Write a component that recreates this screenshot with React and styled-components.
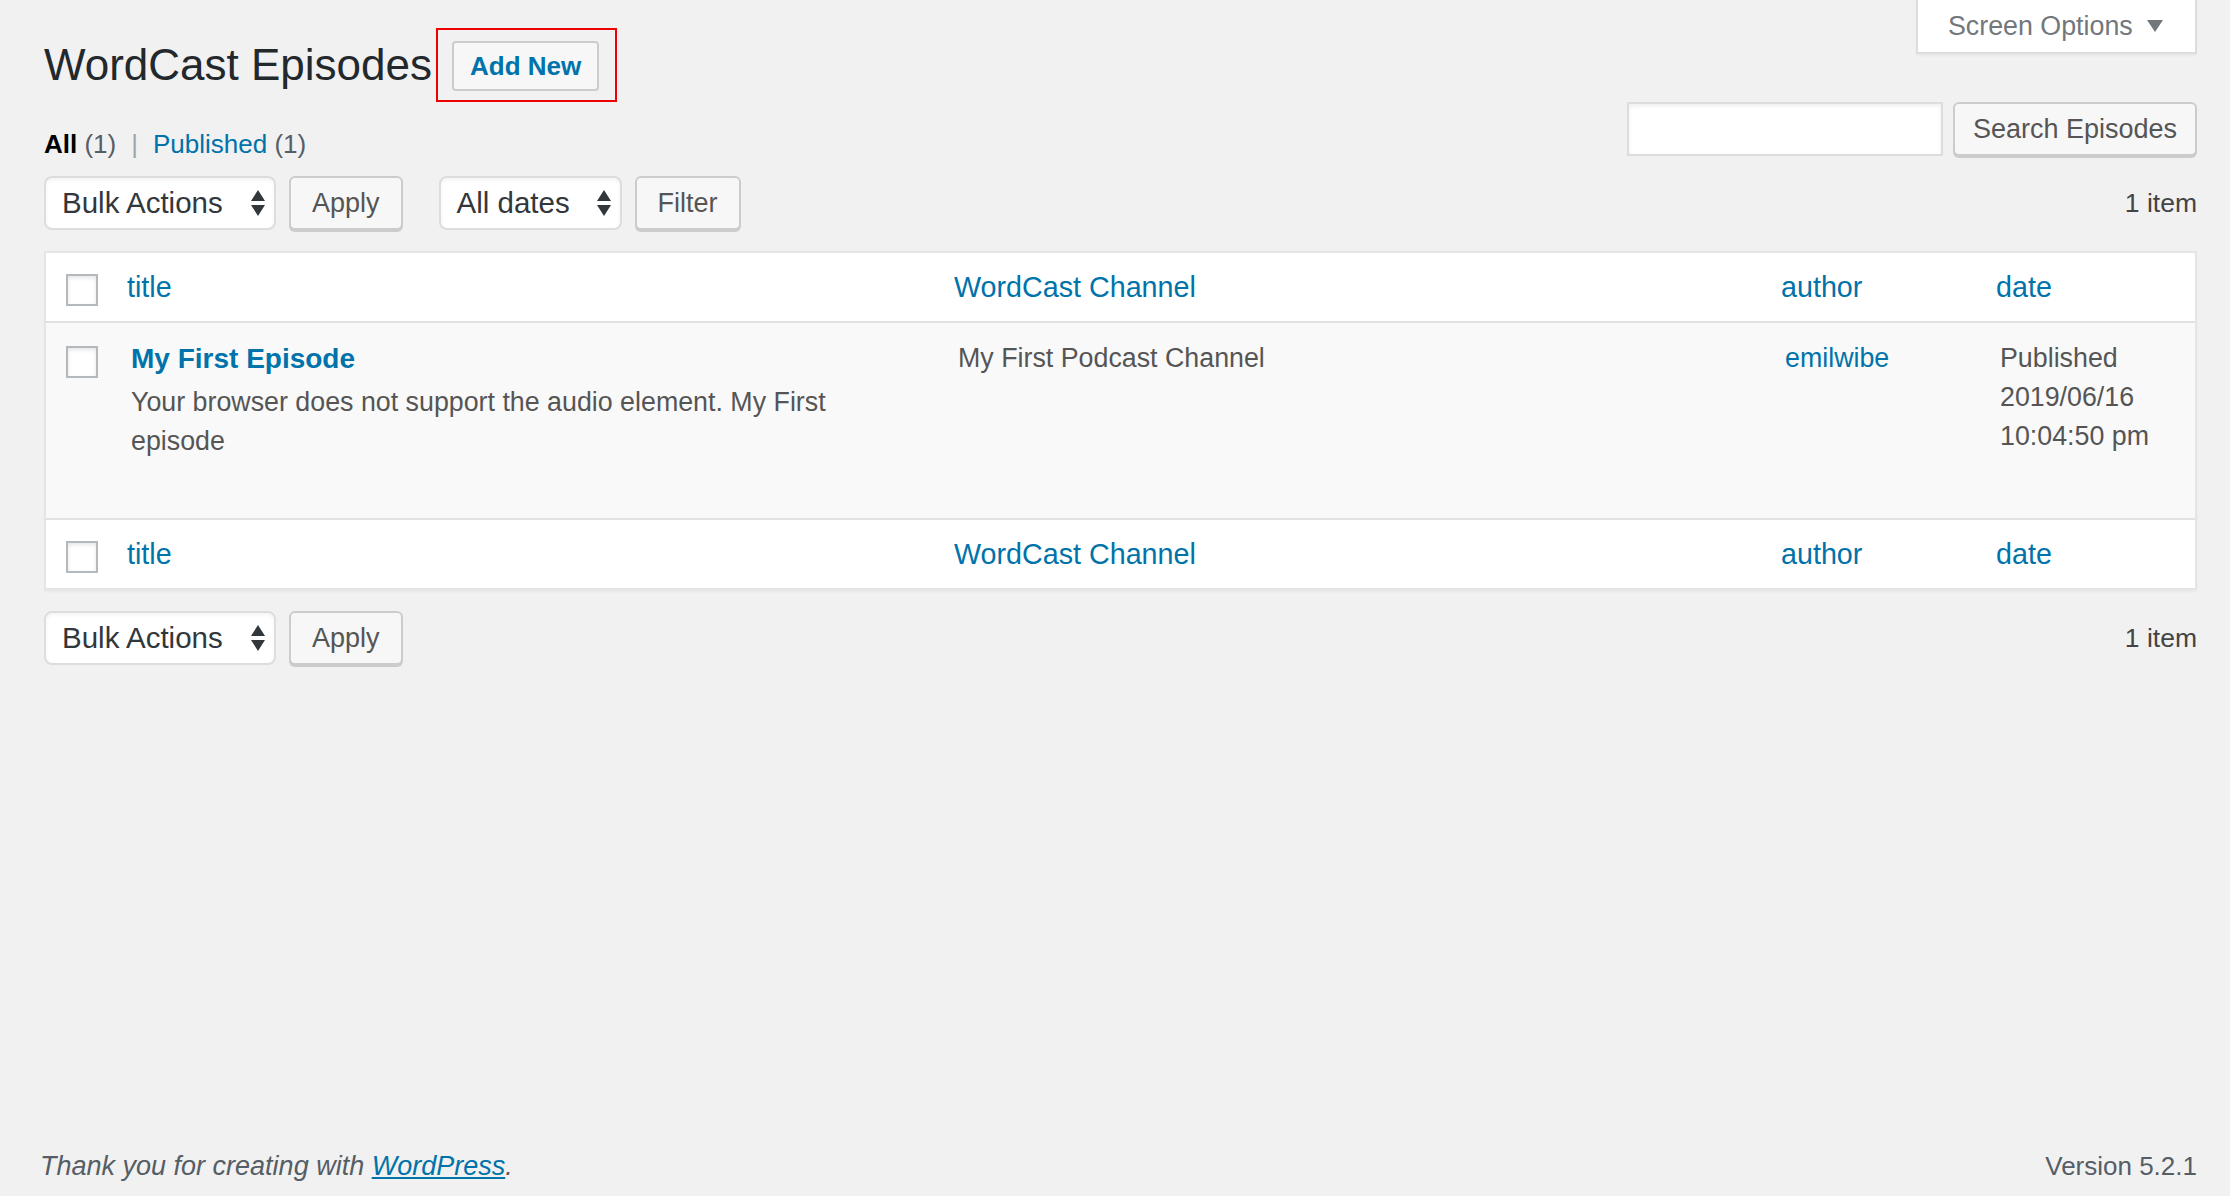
import React from 'react';
import styled, { createGlobalStyle } from 'styled-components';

const GlobalStyle = createGlobalStyle`
  html, body {
    margin: 0;
    padding: 0;
    background: #f1f1f1;
  }
  body {
    font-family: "Liberation Sans", Arial, sans-serif;
    color: #444;
  }
  a {
    color: #0073aa;
    text-decoration: none;
  }
`

const Page = styled.div`
  min-height:       100vh;
  box-sizing:       border-box;
  display:          flex;
  flex-direction:   column;
  padding:          0 33px 0 44px;
`
const Header = styled.div`
  display:          flex;
  justify-content:  space-between;
  align-items:      flex-start;
`
const HeadLeft = styled.div`
  display:          flex;
  flex-direction:   column;
  padding-top:      28px;
`
const TitleRow = styled.div`
  display:          flex;
  align-items:      center;
`
const Title = styled.h1`
  margin:           0;
  font-size:        44px;
  font-weight:      400;
  line-height:      74px;
  color:            #23282d;
`
const Highlight = styled.span`
  display:          flex;
  margin-left:      4px;
  padding:          11px 16px 9px 14px;
  border:           2px solid #ee0000;
`
const AddNew = styled.a`
  display:          flex;
  align-items:      center;
  box-sizing:       border-box;
  height:           50px;
  padding:          0 16px;
  border:           2px solid #ccc;
  border-radius:    4px;
  background:       #f7f7f7;
  color:            #0073aa;
  font-size:        26px;
  font-weight:      700;
`
const SubSub = styled.div`
  margin-top:       24px;
  display:          flex;
  align-items:      center;
  gap:              8px;
  font-size:        26px;
  line-height:      36px;
  color:            #555d66;
`
const Current = styled.span`
  color:            #000;
  font-weight:      700;
`
const Sep = styled.span`
  color:            #a0a5aa;
  margin:           0 7px;
`
const HeadRight = styled.div`
  display:          flex;
  flex-direction:   column;
  align-items:      flex-end;
`
const ScreenTab = styled.div`
  display:          flex;
  align-items:      center;
  gap:              14px;
  box-sizing:       border-box;
  width:            281px;
  height:           54px;
  padding:          0 28px 0 30px;
  background:       #fff;
  border:           2px solid #ddd;
  border-top:       none;
  box-shadow:       0 2px 2px rgba(0, 0, 0, .04);
  color:            #72777c;
  font-size:        26.8px;
`
const SearchBox = styled.div`
  margin-top:       48px;
  display:          flex;
  gap:              10px;
`
const SearchInput = styled.input`
  box-sizing:       border-box;
  width:            316px;
  height:           54px;
  border:           2px solid #ddd;
  background:       #fff;
  box-shadow:       inset 0 2px 4px rgba(0, 0, 0, .07);
  outline:          none;
`
const Button = styled.button`
  box-sizing:       border-box;
  height:           54px;
  padding:          0 ${p => p.$pad || 21}px;
  border:           2px solid #ccc;
  border-radius:    6px;
  background:       #f7f7f7;
  box-shadow:       0 2px 0 #ccc;
  color:            #555;
  font-family:      inherit;
  font-size:        27px;
`
const TableNav = styled.div`
  display:          flex;
  align-items:      center;
  margin-top:       ${p => p.$top}px;
`
const Select = styled.div`
  display:          flex;
  align-items:      center;
  justify-content:  space-between;
  box-sizing:       border-box;
  width:            ${p => p.$w}px;
  height:           54px;
  padding:          0 9px 0 16px;
  margin-right:     13px;
  border:           2px solid #ddd;
  border-radius:    8px;
  background:       #fff;
  box-shadow:       inset 0 2px 4px rgba(0, 0, 0, .05);
  color:            #32373c;
  font-size:        29.5px;
`
const Spacer = styled.div`
  width:            36px;
`
const Count = styled.span`
  margin-left:      auto;
  font-size:        26.5px;
  color:            #444;
`
const ListTable = styled.table`
  width:            100%;
  margin-top:       21px;
  border-collapse:  separate;
  border-spacing:   0;
  table-layout:     fixed;
  background:       #fff;
  border:           2px solid #e5e5e5;
  box-shadow:       0 2px 2px rgba(0, 0, 0, .04);
`
const Col = styled.col`
  width:            ${p => p.$w};
`
const HeadCell = styled.th`
  height:           70px;
  padding:          0 16px;
  box-sizing:       border-box;
  text-align:       left;
  vertical-align:   middle;
  font-weight:      400;
  font-size:        28.7px;
  ${p => p.$foot ? 'border-top: 2px solid #e1e1e1;' : 'border-bottom: 2px solid #e1e1e1;'}
`
const CheckCell = styled.td`
  padding:          ${p => p.$top}px 0 0 20px;
  vertical-align:   top;
  ${p => p.$head && (p.$foot ? 'border-top: 2px solid #e1e1e1;' : 'border-bottom: 2px solid #e1e1e1;')}
`
const Check = styled.input.attrs({ type: 'checkbox' })`
  appearance:       none;
  display:          block;
  margin:           0;
  box-sizing:       border-box;
  width:            32px;
  height:           32px;
  border:           2px solid #b4b9be;
  background:       #fff;
  box-shadow:       inset 0 2px 4px rgba(0, 0, 0, .1);
`
const BodyRow = styled.tr`
  background:       #f9f9f9;
`
const Cell = styled.td`
  padding:          16px 20px ${p => p.$bottom || 16}px;
  vertical-align:   top;
  font-size:        26.8px;
  line-height:      39px;
  color:            #555;
`
const RowTitle = styled.a`
  display:          block;
  margin-bottom:    5px;
  font-size:        28px;
  font-weight:      700;
`
const Footer = styled.div`
  margin:           auto 0 0 -4px;
  padding-bottom:   12px;
  display:          flex;
  justify-content:  space-between;
  font-size:        27px;
  line-height:      36px;
  color:            #555d66;
`
const Thanks = styled.span`
  font-style:       italic;
  a {
    text-decoration: underline;
  }
`
const Version = styled.span`
  font-size:        26px;
`

const Arrows = () => (
  <svg width="14" height="26" viewBox="0 0 14 26">
    <path d="M0 11 L7 0 L14 11 Z M0 15 L14 15 L7 26 Z" fill="#32373c" />
  </svg>
)

const Caret = () => (
  <svg width="16" height="12" viewBox="0 0 16 12">
    <path d="M0 0 H16 L8 12 Z" fill="#72777c" />
  </svg>
)

const Nav = ({ top, dates }) => (
  <TableNav $top={top}>
    <Select $w={232}>Bulk Actions<Arrows /></Select>
    <Button>Apply</Button>
    {dates && (
      <>
        <Spacer />
        <Select $w={183}>All dates<Arrows /></Select>
        <Button>Filter</Button>
      </>
    )}
    <Count>1 item</Count>
  </TableNav>
)

const Columns = ({ foot }) => (
  <tr>
    <CheckCell $top={21} $head $foot={foot}><Check /></CheckCell>
    <HeadCell $foot={foot}><a href="#">title</a></HeadCell>
    <HeadCell $foot={foot}><a href="#">WordCast Channel</a></HeadCell>
    <HeadCell $foot={foot}><a href="#">author</a></HeadCell>
    <HeadCell $foot={foot}><a href="#">date</a></HeadCell>
  </tr>
)

export default function App() {
  return (
    <Page>
      <GlobalStyle />
      <Header>
        <HeadLeft>
          <TitleRow>
            <Title>WordCast Episodes</Title>
            <Highlight><AddNew href="#">Add New</AddNew></Highlight>
          </TitleRow>
          <SubSub>
            <span><Current>All</Current> (1)</span>
            <Sep>|</Sep>
            <span><a href="#">Published</a> (1)</span>
          </SubSub>
        </HeadLeft>
        <HeadRight>
          <ScreenTab>Screen Options<Caret /></ScreenTab>
          <SearchBox>
            <SearchInput />
            <Button $pad={18}>Search Episodes</Button>
          </SearchBox>
        </HeadRight>
      </Header>

      <Nav top={14} dates />

      <ListTable>
        <colgroup>
          <Col $w="65px" />
          <Col $w="auto" />
          <Col $w="auto" />
          <Col $w="215px" />
          <Col $w="215px" />
        </colgroup>
        <thead>
          <Columns />
        </thead>
        <tbody>
          <BodyRow>
            <CheckCell $top={23}><Check /></CheckCell>
            <Cell $bottom={57}>
              <RowTitle href="#">My First Episode</RowTitle>
              Your browser does not support the audio element. My First episode
            </Cell>
            <Cell>My First Podcast Channel</Cell>
            <Cell><a href="#">emilwibe</a></Cell>
            <Cell>Published<br />2019/06/16<br />10:04:50 pm</Cell>
          </BodyRow>
        </tbody>
        <tfoot>
          <Columns foot />
        </tfoot>
      </ListTable>

      <Nav top={21} />

      <Footer>
        <Thanks>Thank you for creating with <a href="#">WordPress</a>.</Thanks>
        <Version>Version 5.2.1</Version>
      </Footer>
    </Page>
  );
}
